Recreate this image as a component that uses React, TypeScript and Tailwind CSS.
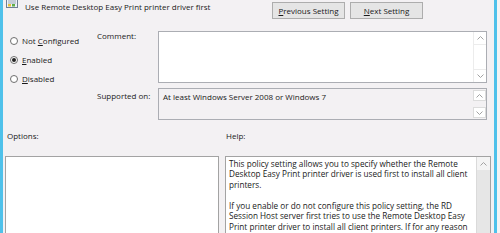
import React from 'react';

const font = "font-['Open_Sans',sans-serif] text-[8px] leading-[11px] text-[#1a1a1a]";

function Chevron({ dir }: { dir: 'up' | 'down' }) {
  return (
    <svg width="7" height="4" viewBox="0 0 7 4">
      <polyline
        points={dir === 'up' ? '0.5,3.5 3.5,0.5 6.5,3.5' : '0.5,0.5 3.5,3.5 6.5,0.5'}
        fill="none"
        stroke="#a2a2a2"
        strokeWidth="1"
      />
    </svg>
  );
}

function PolicyIcon() {
  return (
    <svg width="12" height="13" viewBox="0 0 12 13" className="-mt-[5px]">
      <rect x="0.5" y="0.5" width="11" height="12" fill="#eef3f8" stroke="#6f7f93" />
      <rect x="1" y="1" width="10" height="3" fill="#4a8fd1" />
      <line x1="2" y1="6" x2="10" y2="6" stroke="#9aa7b6" />
      <line x1="2" y1="8" x2="10" y2="8" stroke="#9aa7b6" />
      <rect x="2" y="9" width="3" height="2.5" fill="#e9c23b" />
      <rect x="6" y="9" width="3" height="2.5" fill="#5fae4a" />
    </svg>
  );
}

function Radio({ label, u, rest, checked }: { label?: string; u: string; rest: string; checked?: boolean }) {
  return (
    <div className="flex h-[19px] items-center gap-[4px]">
      <div className="flex h-[8px] w-[8px] items-center justify-center rounded-full border border-[#6e6e6e] bg-white">
        {checked && <div className="h-[4px] w-[4px] rounded-full bg-[#222]" />}
      </div>
      <span>
        {label}
        <span className="underline">{u}</span>
        {rest}
      </span>
    </div>
  );
}

export default function App() {
  return (
    <div className={`flex h-[233px] w-[500px] overflow-hidden bg-[#f3f1f3] ${font}`}>
      <div className="w-[3px] shrink-0 bg-[#4fc1ea]" />

      <div className="flex w-[491px] shrink-0 flex-col">
        {/* Title row */}
        <div className="flex h-[20px] shrink-0">
          <div className="ml-[3px] w-[12px]">
            <PolicyIcon />
          </div>
          <div className="ml-[7px] flex-1 whitespace-nowrap pt-[0.5px]">
            Use Remote Desktop Easy Print printer driver first
          </div>
          <div className="mr-[71px] mt-[2px] flex gap-[5px]">
            <button className="flex h-[17px] w-[73px] items-center justify-center border border-[#adadad] bg-[#e5e5e5]">
              <span>
                <span className="underline">P</span>revious Setting
              </span>
            </button>
            <button className="flex h-[17px] w-[73px] items-center justify-center border border-[#adadad] bg-[#e5e5e5]">
              <span>
                <span className="underline">N</span>ext Setting
              </span>
            </button>
          </div>
        </div>

        {/* State + comment + supported */}
        <div className="flex shrink-0">
          <div className="w-[94px] pl-[7px] pt-[11px]">
            <Radio label="Not " u="C" rest="onfigured" />
            <Radio u="E" rest="nabled" checked />
            <Radio u="D" rest="isabled" />
          </div>
          <div className="flex flex-col pt-[11px]">
            <div className="flex">
              <div className="-mt-[1.5px] w-[61px]">Comment:</div>
              <div className="flex h-[52px] w-[329px] border border-[#abadb3] bg-white">
                <div className="flex-1" />
                <div className="flex w-[13px] flex-col justify-between border-l border-[#ececec]">
                  <div className="flex h-[13px] items-center justify-center border-b border-[#ececec]">
                    <Chevron dir="up" />
                  </div>
                  <div className="flex h-[13px] items-center justify-center border-t border-[#ececec]">
                    <Chevron dir="down" />
                  </div>
                </div>
              </div>
            </div>
            <div className="mt-[5px] flex">
              <div className="mt-[1.5px] w-[61px]">Supported on:</div>
              <div className="flex h-[32px] w-[329px] border border-[#abadb3] bg-[#f3f1f3]">
                <div className="flex-1 whitespace-nowrap pl-[4px] pt-[2px]">
                  At least Windows Server 2008 or Windows 7
                </div>
                <div className="flex w-[13px] flex-col justify-between py-[1px]">
                  <div className="flex h-[11px] items-center justify-center border border-[#dcdcdc] bg-white">
                    <Chevron dir="up" />
                  </div>
                  <div className="flex h-[11px] items-center justify-center border border-[#dcdcdc] bg-white">
                    <Chevron dir="down" />
                  </div>
                </div>
              </div>
            </div>
          </div>
        </div>

        {/* Options / Help labels */}
        <div className="mt-[10px] flex h-[11px] shrink-0">
          <div className="w-[223px] pl-[4px]">Options:</div>
          <div>Help:</div>
        </div>

        {/* Options / Help panes */}
        <div className="mt-[15px] flex h-[100px] shrink-0">
          <div className="ml-[2px] w-[214px] border border-[#a3a3a3] bg-white" />
          <div className="ml-[6px] flex w-[266px] border border-[#a3a3a3] bg-white">
            <div className="flex-1 whitespace-nowrap pl-[3px] pt-[1.5px] text-[8.2px] leading-[10.6px]">
              <div>This policy setting allows you to specify whether the Remote</div>
              <div>Desktop Easy Print printer driver is used first to install all client</div>
              <div>printers.</div>
              <div>&nbsp;</div>
              <div>If you enable or do not configure this policy setting, the RD</div>
              <div>Session Host server first tries to use the Remote Desktop Easy</div>
              <div>Print printer driver to install all client printers. If for any reason</div>
            </div>
            <div className="flex w-[14px] flex-col border-l border-[#dadada] bg-[#e6e6e6]">
              <div className="flex h-[13px] items-center justify-center bg-[#f4f4f4]">
                <Chevron dir="up" />
              </div>
            </div>
          </div>
        </div>
      </div>

      <div className="w-[3px] shrink-0 bg-[#4fc1ea]" />
      <div className="w-[3px] shrink-0 bg-[#f4f4f4]" />
    </div>
  );
}
